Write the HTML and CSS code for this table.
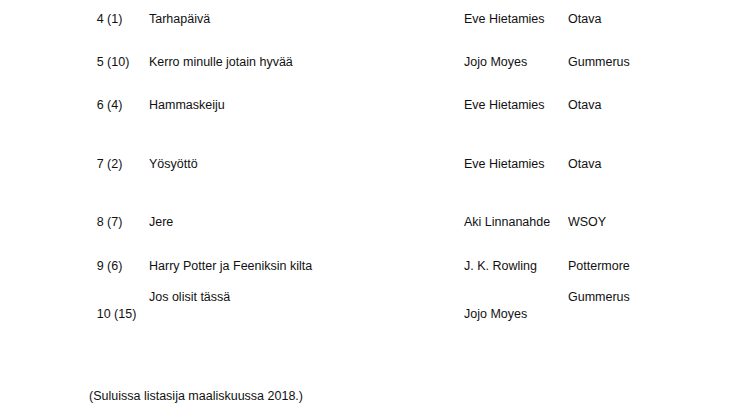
FILE: index.html
```html
<!DOCTYPE html>
<html lang="fi">
<head>
<meta charset="utf-8">
<title>Lista</title>
<link rel="stylesheet" href="styles.css">
</head>
<body>
<div class="page">
  <div class="list">
    <div class="row"><span>4 (1)</span><span>Tarhapäivä</span><span>Eve Hietamies</span><span>Otava</span></div>
    <div class="row"><span>5 (10)</span><span>Kerro minulle jotain hyvää</span><span>Jojo Moyes</span><span>Gummerus</span></div>
    <div class="row tall"><span>6 (4)</span><span>Hammaskeiju</span><span>Eve Hietamies</span><span>Otava</span></div>
    <div class="row tall"><span>7 (2)</span><span>Yösyöttö</span><span>Eve Hietamies</span><span>Otava</span></div>
    <div class="row"><span>8 (7)</span><span>Jere</span><span>Aki Linnanahde</span><span>WSOY</span></div>
    <div class="row short"><span>9 (6)</span><span>Harry Potter ja Feeniksin kilta</span><span>J. K. Rowling</span><span>Pottermore</span></div>
    <div class="row double"><span class="low">10 (15)</span><span>Jos olisit tässä</span><span class="low">Jojo Moyes</span><span>Gummerus</span></div>
  </div>
  <p class="note">(Suluissa listasija maaliskuussa 2018.)</p>
</div>
</body>
</html>
```
FILE: styles.css
```css
html, body {
  margin: 0;
  padding: 0;
  background: #fff;
}
.page {
  font-family: "Liberation Sans", Arial, sans-serif;
  font-size: 12.5px;
  line-height: 16.6px;
  color: #111;
  padding-top: 10.7px;
}
.list {
  padding-left: 96.7px;
}
.row {
  display: grid;
  grid-template-columns: 52.3px 315px 104px auto;
  height: 43.4px;
  align-items: start;
}
.row.tall {
  height: 58.35px;
}
.row.short {
  height: 31.7px;
}
.row.double {
  height: 33.2px;
}
.low {
  align-self: end;
}
.note {
  margin: 65.1px 0 0 89px;
}
```
